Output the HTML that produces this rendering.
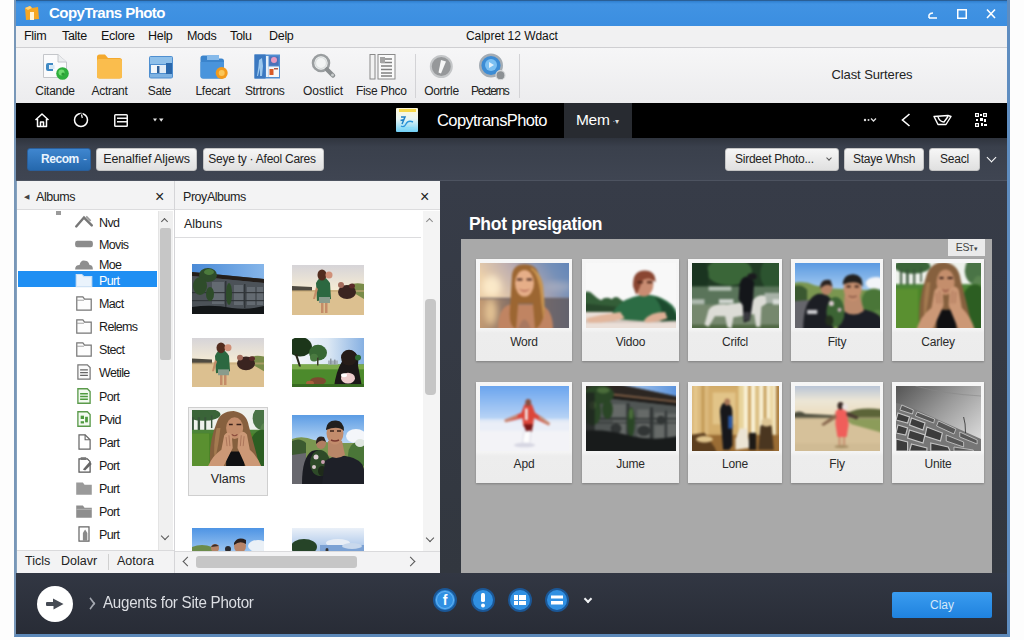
<!DOCTYPE html>
<html><head><meta charset="utf-8"><title>CopyTrans Photo</title>
<style>
*{box-sizing:border-box;margin:0;padding:0}
html,body{width:1024px;height:640px;overflow:hidden;background:#fdfdfd;font-family:"Liberation Sans",sans-serif;}
.a{position:absolute}
#win{position:absolute;left:14px;top:0;width:996px;height:637px;background:#3a404d;overflow:hidden;border-left:2px solid #7897b8;border-right:3px solid #5f8dc0;border-bottom:3px solid #5c88b8}
#stage{position:absolute;left:-16px;top:0;width:1024px;height:640px}
#title{left:16px;top:0;width:992px;height:26px;background:linear-gradient(#2f7fcf 0,#4193e3 3px,#3b8ee0 100%);border-top:1px solid #2a5f96}
#title .t{top:3px;color:#fff;font-weight:bold;font-size:15px;letter-spacing:-0.55px}
#menu{left:16px;top:26px;width:992px;height:22px;background:#f1f1f2;border-bottom:1px solid #cfcfd2}
#menu span{position:absolute;top:3px;font-size:12.5px;letter-spacing:-0.3px;color:#111}
#tool{left:16px;top:48px;width:992px;height:55px;background:linear-gradient(#f6f6f7,#ececee)}
#tool .l{position:absolute;top:36px;font-size:12px;letter-spacing:-0.3px;color:#222;transform:translateX(-50%);white-space:nowrap}
#tool .sep{position:absolute;top:6px;width:1px;height:44px;background:#d3d3d6}
#tool svg.tb{position:absolute;left:0;top:0;width:992px;height:55px}
#black{left:16px;top:103px;width:992px;height:35px;background:#000}
#black svg{position:absolute}
#black .ct{position:absolute;left:421px;top:8px;color:#fff;font-size:16.5px;letter-spacing:-0.6px;white-space:nowrap}
#black .tab{position:absolute;left:548px;top:0;width:68px;height:35px;background:#282b31;color:#fff;font-size:15.5px;line-height:33px;padding-left:12px;letter-spacing:-0.3px}
#sl{left:16px;top:138px;width:992px;height:43px;background:linear-gradient(#2f343e 0,#3a404c 9px,#3f4552 100%);border-bottom:1px solid #4d5360}
.btn{position:absolute;top:148px;height:23px;border-radius:3px;background:linear-gradient(#f6f6f6,#e0e0e0);border:1px solid #c4c4c4;font-size:12px;letter-spacing:-0.25px;color:#222;text-align:center;line-height:21px;white-space:nowrap}
.btn.blue{background:linear-gradient(#3f86cf,#2568ad);border:1px solid #2a5f9b;color:#fff;font-weight:bold}
#lp{left:17px;top:181px;width:157px;height:392px;background:#fff;overflow:hidden}
.ph{position:absolute;left:0;top:0;right:0;height:29px;background:#f3f3f4;border-bottom:1px solid #dcdcde;font-size:12.5px;letter-spacing:-0.45px;color:#222;line-height:32px}
#mp{left:174px;top:181px;width:266px;height:392px;background:#fff;border-left:1px solid #d5d5d8;overflow:hidden}
.ti{position:absolute;left:82px;font-size:12.5px;letter-spacing:-0.65px;color:#1a1a1a;line-height:16px;white-space:nowrap}
.ico{position:absolute;left:57px;width:20px;height:18px;margin-top:-1px}
#rp{left:440px;top:181px;width:568px;height:392px;background:linear-gradient(#373c48,#32373f)}
#gp{left:461px;top:239px;width:531px;height:334px;background:#a9a9a9}
.card{position:absolute;width:96px;height:102px;background:linear-gradient(#f6f6f6 0,#f4f4f4 70px,#ededed 74px,#ececec 100%);box-shadow:0 1px 2px rgba(0,0,0,.25)}
.card .im{position:absolute;left:3.5px;top:3.5px;right:3.5px;height:65px;overflow:hidden;background:#888}
.card .lb{position:absolute;left:0;right:0;top:76px;text-align:center;font-size:12px;letter-spacing:-0.2px;color:#2a2a2a}
.card svg,.th svg,.selim svg{display:block;width:100%;height:100%}
.card .im svg{filter:blur(0.8px);margin:-2px;width:calc(100% + 4px);height:calc(100% + 4px)}
.card .im.nb svg{filter:none;margin:0;width:100%;height:100%}
.th{position:absolute;overflow:hidden;background:#888}
#bot{left:16px;top:573px;width:992px;height:61px;background:linear-gradient(#323743,#282c36)}
.sbv{position:absolute;background:#f0f0f0}
.sbt{position:absolute;background:#c6c6c6;border-radius:2px}
.chev{position:absolute;width:7px;height:7px;border-right:1.500px solid #555;border-bottom:1.500px solid #555}
.bic{position:absolute;top:588px;width:24px;height:24px}
</style></head><body>
<svg width="0" height="0" style="position:absolute"><defs><filter id="b1" x="-10%" y="-10%" width="120%" height="120%"><feGaussianBlur stdDeviation="0.8"/></filter><filter id="b3" x="-10%" y="-10%" width="120%" height="120%"><feGaussianBlur stdDeviation="0.55"/></filter><filter id="b0" x="-2%" y="-10%" width="104%" height="120%"><feGaussianBlur stdDeviation="0.35"/></filter><filter id="b2" x="-30%" y="-30%" width="160%" height="160%"><feGaussianBlur stdDeviation="3"/></filter></defs></svg>
<div id="win"><div id="stage">
<div id="title" class="a">
<svg class="a" style="left:8px;top:4px" width="16" height="16" viewBox="0 0 16 16"><path d="M1 3 L6 1 L8 3 L14 2 L15 14 L2 15Z" fill="#f5a623"/><path d="M1 3 L6 1 L8 3 L4 5Z" fill="#ffd27a"/><rect x="6" y="7" width="4" height="8" fill="#fff3d6"/></svg>
<div class="a t" style="left:33px">CopyTrans Photo</div>
<svg class="a" style="left:910px;top:6px" width="70" height="14" viewBox="0 0 70 14"><path d="M3 11 H11 M3 11 V8 Q4 6 7 6" stroke="#fff" stroke-width="1.500" fill="none"/><rect x="31.750" y="2.750" width="8.500" height="8.500" stroke="#fff" stroke-width="1.500" fill="none"/><path d="M61 2.500 L69 11 M69 2.500 L61 11" stroke="#fff" stroke-width="1.600"/></svg>
</div>
<div id="menu" class="a">
<span style="left:8px">Flim</span><span style="left:46px">Talte</span><span style="left:85px">Eclore</span><span style="left:132px">Help</span><span style="left:171px">Mods</span><span style="left:214px">Tolu</span><span style="left:253px">Delp</span><span style="left:450px;font-size:12px;letter-spacing:-0.05px">Calpret 12 Wdact</span>
</div>
<div id="tool" class="a">
<svg class="tb" viewBox="16 48 992 55">
<g filter="url(#b0)">
<path d="M43.500 54.500 H58 L66.500 62 V77.500 H43.500Z" fill="#fbfbfc" stroke="#c4c6ca"/><path d="M58 54.500 V62 H66.500" fill="#eceef0" stroke="#c4c6ca"/>
<path d="M53 63 H48 Q46 63 46 65 V69 Q46 71 48 71 H53 V69 H49 V65 H53Z" fill="#3f8ac4"/><rect x="49.500" y="65" width="5" height="4" fill="#d6e8f6"/>
<circle cx="62.500" cy="73.500" r="6.300" fill="#2fae3c"/><circle cx="61.500" cy="72.500" r="3" fill="#6fdc6f"/><circle cx="63" cy="74" r="1.600" fill="#2a9a34"/>
<path d="M97 57 Q97 54.500 99.500 54.500 H105 L108 58 H119.500 Q122 58 122 60.500 V76 Q122 78.500 119.500 78.500 H99.500 Q97 78.500 97 76Z" fill="#f4a92e"/><path d="M97 60.500 Q97 59 99 59 H120 Q122 59 122 61 V76 Q122 78.500 119.500 78.500 H99.500 Q97 78.500 97 76Z" fill="#fabd4e"/>
<rect x="149" y="56" width="24" height="22.500" rx="2" fill="#4f8fd0"/><rect x="150" y="57" width="22" height="7" fill="#8fc0ea"/><rect x="151" y="65" width="12" height="8" fill="#f2f6fa"/><rect x="157" y="66" width="2.500" height="7" fill="#2f5f98"/><rect x="160" y="65" width="6" height="8" fill="#e2ecf6"/><rect x="166" y="63" width="6" height="11" fill="#2c68ac"/><rect x="150" y="74" width="22" height="3.500" fill="#7eb2e2"/>
<path d="M200.500 58 Q200.500 55.500 203 55.500 H208 L210.500 58.500 H221.500 Q224 58.500 224 61 V76 Q224 78.500 221.500 78.500 H203 Q200.500 78.500 200.500 76Z" fill="#3a84cc"/><path d="M207 55 H219 V60 H207Z" fill="#86baea"/><path d="M200.500 62 H224 V76 Q224 78.500 221.500 78.500 H203 Q200.500 78.500 200.500 76Z" fill="#4a94dc"/>
<circle cx="221.700" cy="73" r="6" fill="#f39a1c"/><circle cx="221.700" cy="73" r="3" fill="#fbc658"/>
<rect x="254.500" y="54.500" width="25.500" height="24" fill="#4f8ed2"/><rect x="254.500" y="54.500" width="11" height="24" fill="#3a78c0"/><path d="M259 60 L262 58 L263 66 L262 76 H260 L260 68 L258 76 H257 L258.500 66Z" fill="#9cc8ee"/><rect x="266" y="56" width="2.500" height="21" fill="#e8f0f8"/>
<rect x="269.500" y="56.500" width="9" height="9" fill="#4c6fb8"/><circle cx="274" cy="60" r="3" fill="#e89ac0"/><rect x="268.500" y="66.500" width="10.500" height="10.500" fill="#f6f6f6"/><rect x="269.500" y="69" width="4" height="6" fill="#d85a28"/><rect x="274" y="68" width="4" height="1.500" fill="#b05a48"/>
<circle cx="321" cy="63" r="8" fill="#f2f4f4" stroke="#9a9ea0" stroke-width="2.600"/><circle cx="321" cy="63" r="5.500" fill="none" stroke="#d8dcdc" stroke-width="1.200"/><path d="M327 69.500 L333 75.500" stroke="#8a8e90" stroke-width="4.500" stroke-linecap="round"/><circle cx="332.500" cy="75" r="1.500" fill="#c8cccc"/>
<rect x="370" y="54.500" width="5" height="24.500" fill="#f2f2f2" stroke="#8a8a8a"/><rect x="378" y="54.500" width="17" height="24.500" fill="#fafafa" stroke="#8a8a8a"/><path d="M381 59 H392 M381 62.500 H392 M381 66 H392 M381 69.500 H392 M381 73 H392 M381 76 H392" stroke="#808080" stroke-width="1.400"/><rect x="380" y="57" width="5" height="6" fill="#a4a4a4"/>
<circle cx="441.300" cy="66.500" r="10.500" fill="#96989a" stroke="#c4c6c8" stroke-width="2"/><path d="M441 60 L446 61.500 L441 73.500 L438.500 72.500Z" fill="#f6f6f6"/>
<circle cx="491" cy="65.500" r="10.800" fill="#3d8cd4" stroke="#a4acb4" stroke-width="2.400"/><circle cx="491" cy="65" r="6" fill="#7cc0f2"/><path d="M489 62 L494 65 L489 68Z" fill="#e4f2fc"/><circle cx="500.500" cy="75.200" r="4.500" fill="#8c9094" stroke="#d4d6d8" stroke-width="1.200"/>
</g></svg>
<span class="l" style="left:39px">Citande</span><span class="l" style="left:93.5px">Actrant</span><span class="l" style="left:143.5px">Sate</span><span class="l" style="left:196.8px">Lfecart</span><span class="l" style="left:248.7px">Strtrons</span><span class="l" style="left:307px;letter-spacing:0">Oostlict</span><span class="l" style="left:365.3px">Fise Phco</span><span class="l" style="left:425.5px">Oortrle</span><span class="l" style="left:473.8px;letter-spacing:-1.2px">Pecterns</span>
<div class="sep" style="left:399px"></div><div class="sep" style="left:503px"></div>
<span class="l" style="left:856px;top:19px;font-size:13px;letter-spacing:-0.1px">Clast Surteres</span>
</div>
<div id="black" class="a">
<svg style="left:18px;top:9px" width="16" height="16" viewBox="0 0 16 16"><path d="M1.500 8 L8 2 L14.500 8 M3.500 7 V14.500 H12.500 V7 M6.500 14 V10 H9.500 V14" stroke="#fff" stroke-width="1.500" fill="none" stroke-linejoin="round"/></svg>
<svg style="left:57px;top:9px" width="16" height="16" viewBox="0 0 16 16"><circle cx="8" cy="8" r="6.500" stroke="#fff" stroke-width="1.500" fill="none"/><path d="M8 1.500 L9.500 6" stroke="#000" stroke-width="3"/><path d="M8.500 2.500 L9.300 6" stroke="#fff" stroke-width="1.200"/></svg>
<svg style="left:98px;top:11px" width="15" height="13" viewBox="0 0 15 13"><rect x=".75" y=".75" width="12.500" height="11.500" rx=".8" stroke="#f4f4f4" stroke-width="1.500" fill="none"/><path d="M3 4.300 H13 M3 7.800 H13" stroke="#f4f4f4" stroke-width="1.500"/></svg>
<svg style="left:136px;top:14px" width="14" height="6" viewBox="0 0 14 6"><path d="M1 1.500 L5 1.500 L3 4.500Z M7 1.500 L11.500 1.500 L9.200 4.800Z" fill="#e4e4e4"/></svg>
<svg style="left:380px;top:5px" width="22" height="24" viewBox="0 0 22 24"><defs><linearGradient id="lg" x2="0" y2="1"><stop offset="0" stop-color="#fff8da"/><stop offset=".45" stop-color="#eaf6f4"/><stop offset="1" stop-color="#6fcff6"/></linearGradient></defs><rect width="22" height="24" rx="1" fill="url(#lg)"/><rect x="3" y="1" width="17" height="3" fill="#f6d84a"/><path d="M5 9 L9 9 L6 16 M4.500 12.500 L8.500 11.500" stroke="#1f82c8" stroke-width="1.500" fill="none"/><path d="M5 18 Q8 20 10 16 Q12 12 17 14" stroke="#2a96dc" stroke-width="1.400" fill="none"/><path d="M4 21 Q10 19 18 20" stroke="#8adcf8" stroke-width="1.500" fill="none"/></svg>
<div class="ct">CopytransPhoto</div>
<div class="tab">Mem<span style="font-size:8px;letter-spacing:0;color:#ddd;position:relative;top:-1px;left:3px">·▾</span></div>
<svg style="left:847px;top:14px" width="14" height="6" viewBox="0 0 14 6"><circle cx="2" cy="3" r="1.200" fill="#ddd"/><circle cx="5.500" cy="3" r="1" fill="#ddd"/><path d="M8 1.500 L10.500 4 L13 1.500" stroke="#ddd" stroke-width="1.300" fill="none"/></svg>
<svg style="left:885px;top:10px" width="10" height="14" viewBox="0 0 10 14"><path d="M8.500 1 L1.500 7 L8.500 13" stroke="#fff" stroke-width="1.600" fill="none"/></svg>
<svg style="left:917px;top:11px" width="19" height="12" viewBox="0 0 19 12"><path d="M1 2.500 L15 1.500 L18 2.500 L13 10.500 H5Z M5 3 Q7 8 11 8 L15 2.500" stroke="#fff" stroke-width="1.400" fill="none" stroke-linejoin="round"/></svg>
<svg style="left:959px;top:10px" width="12" height="14" viewBox="0 0 12 14"><g fill="#fff"><rect x="0" y="0" width="4" height="4"/><rect x="8" y="0" width="4" height="4"/><rect x="0" y="10" width="4" height="4"/><rect x="5" y="1" width="2" height="2"/><rect x="5" y="5" width="3" height="3"/><rect x="1" y="6" width="2" height="2"/><rect x="9" y="6" width="2" height="3"/><rect x="6" y="10" width="2" height="3"/><rect x="9" y="11" width="3" height="2"/></g><g fill="#000"><rect x="1.200" y="1.200" width="1.600" height="1.600"/><rect x="9.200" y="1.200" width="1.600" height="1.600"/><rect x="1.200" y="11.200" width="1.600" height="1.600"/></g></svg>
</div>
<div id="sl" class="a"></div>
<div class="btn blue" style="left:27px;width:64px;text-align:left;padding-left:13px;color:#eaf4fe;letter-spacing:-0.45px">Recom<span style="font-weight:normal;color:#a8c8ea;position:absolute;left:55px">-</span></div>
<div class="btn" style="left:96px;width:101px;font-size:12.500px;letter-spacing:-0.05px">Eenalfief Aljews</div>
<div class="btn" style="left:203px;width:121px;text-indent:-3px">Seye ty · Afeol Cares</div>
<div class="btn" style="left:725px;width:114px;text-align:left;padding-left:9px">Sirdeet Photo...<div class="chev" style="left:101px;top:7px;width:4px;height:4px;transform:rotate(45deg)"></div></div>
<div class="btn" style="left:844px;width:80px">Staye Whsh</div>
<div class="btn" style="left:929px;width:51px">Seacl</div>
<div class="chev" style="left:988px;top:154px;transform:rotate(45deg);border-color:#fff"></div>

<div class="a" style="left:16px;top:181px;width:1px;height:392px;background:#86a2be"></div>
<div id="lp" class="a">
<div class="ph"><span style="position:absolute;left:7px;font-size:7px;color:#444">◀</span><span style="position:absolute;left:19px">Albums</span><span style="position:absolute;left:138px;font-size:16px">×</span></div>
<div style="position:absolute;left:39px;top:30px;width:5px;height:4px;background:#9a9a9a"></div>
<svg class="ico" style="top:33px" viewBox="0 0 18 16"><path d="M2 12 L9 4 L16 11" stroke="#777" stroke-width="2.2" fill="none" stroke-linecap="round"/><path d="M11 3 L15 7" stroke="#999" stroke-width="1.5"/></svg><div class="ti" style="top:34px">Nvd</div>
<svg class="ico" style="top:55px" viewBox="0 0 18 16"><rect x="1" y="5" width="16" height="6" rx="2" fill="#8c8c8c"/></svg><div class="ti" style="top:56px">Movis</div>
<svg class="ico" style="top:75px" viewBox="0 0 18 16"><path d="M1 13 Q1 9 5 9 Q6 4 10 5 Q13 5 14 9 Q17 9 17 13Z" fill="#8e8e8e"/></svg><div class="ti" style="top:76px">Moe</div>
<div style="position:absolute;left:1px;top:90px;width:139px;height:16px;background:#1f8ff3"></div><svg class="ico" style="top:91px" viewBox="0 0 18 16"><path d="M2 3 L7 3 L9 5 L16 5 L16 14 L2 14Z" fill="#eaf3fc" stroke="#cfe2f5" stroke-width="1"/></svg><div class="ti" style="top:92px;color:#fff">Purt</div>
<svg class="ico" style="top:114px" viewBox="0 0 18 16"><path d="M2.500 2.500 L8 2.500 L9.500 4.500 L15.500 4.500 L15.500 14.500 L2.500 14.500Z" fill="#fdfdfd" stroke="#777" stroke-width="1.100"/><path d="M2.500 5.500 L9 5.500" stroke="#999" stroke-width=".8"/></svg><div class="ti" style="top:115px">Mact</div>
<svg class="ico" style="top:137px" viewBox="0 0 18 16"><path d="M2.500 2.500 L8 2.500 L9.500 4.500 L15.500 4.500 L15.500 14.500 L2.500 14.500Z" fill="#fdfdfd" stroke="#777" stroke-width="1.100"/><path d="M2.500 5.500 L9 5.500" stroke="#999" stroke-width=".8"/></svg><div class="ti" style="top:138px">Relems</div>
<svg class="ico" style="top:160px" viewBox="0 0 18 16"><path d="M2.500 2.500 L8 2.500 L9.500 4.500 L15.500 4.500 L15.500 14.500 L2.500 14.500Z" fill="#fdfdfd" stroke="#777" stroke-width="1.100"/><path d="M2.500 5.500 L9 5.500" stroke="#999" stroke-width=".8"/></svg><div class="ti" style="top:161px">Stect</div>
<svg class="ico" style="top:183px" viewBox="0 0 18 16"><path d="M3.500 1.500 L12 1.500 L14.500 4 L14.500 14.500 L3.500 14.500Z" fill="#fafafa" stroke="#777" stroke-width="1.100"/><path d="M5.500 6 H12.500 M5.500 8.500 H12.500 M5.500 11 H12.500" stroke="#666" stroke-width="1.100"/></svg><div class="ti" style="top:184px">Wetile</div>
<svg class="ico" style="top:207px" viewBox="0 0 18 16"><path d="M3.500 1.500 L12 1.500 L14.500 4 L14.500 14.500 L3.500 14.500Z" fill="#f2faf0" stroke="#5a9a4a" stroke-width="1.200"/><path d="M5.500 6 H12.500 M5.500 8.500 H12.500 M5.500 11 H12.500" stroke="#4e9a3e" stroke-width="1.300"/></svg><div class="ti" style="top:208px">Port</div>
<svg class="ico" style="top:230px" viewBox="0 0 18 16"><path d="M3.500 1.500 L12 1.500 L14.500 4 L14.500 14.500 L3.500 14.500Z" fill="#f2faf0" stroke="#5a9a4a" stroke-width="1.200"/><rect x="6" y="5" width="3" height="3" fill="#4e9a3e"/><rect x="10" y="6" width="2.500" height="5" fill="#4e9a3e"/><rect x="6" y="10" width="3" height="2" fill="#4e9a3e"/></svg><div class="ti" style="top:231px">Pvid</div>
<svg class="ico" style="top:253px" viewBox="0 0 18 16"><path d="M4.500 1.500 L10 1.500 L14.500 6 L14.500 14.500 L4.500 14.500Z" fill="#fff" stroke="#666" stroke-width="1.100"/><path d="M10 1.500 L10 6 L14.500 6" fill="none" stroke="#666" stroke-width="1"/></svg><div class="ti" style="top:254px">Part</div>
<svg class="ico" style="top:276px" viewBox="0 0 18 16"><path d="M4.500 2.500 L12 2.500 L14.500 5 L14.500 14.500 L4.500 14.500Z" fill="#fff" stroke="#555" stroke-width="1.100"/><path d="M8 12 L14 5 L16 7 L10 13Z" fill="#666"/><rect x="6" y="1" width="5" height="2.500" fill="#777"/></svg><div class="ti" style="top:277px">Port</div>
<svg class="ico" style="top:299px" viewBox="0 0 18 16"><path d="M2 3 L8 3 L9.500 5 L16 5 L16 14 L2 14Z" fill="#9a9a9a"/></svg><div class="ti" style="top:300px">Purt</div>
<svg class="ico" style="top:322px" viewBox="0 0 18 16"><path d="M2 3 L8 3 L9.500 5 L16 5 L16 14 L2 14Z" fill="#8e8e8e"/><path d="M2 6.500 H16" stroke="#b8b8b8" stroke-width=".8"/></svg><div class="ti" style="top:323px">Port</div>
<svg class="ico" style="top:345px" viewBox="0 0 18 16"><path d="M4.500 1.500 L13.500 1.500 L13.500 14.500 L4.500 14.500Z" fill="#fff" stroke="#666" stroke-width="1.100"/><path d="M8 14 L8 7 L10 4 L12 7 L12 14Z" fill="#8a8a8a"/></svg><div class="ti" style="top:346px">Purt</div>

<div class="sbv" style="left:141px;top:30px;width:15px;height:339px;border-left:1px solid #e4e4e4"></div>
<div class="sbt" style="left:143px;top:47px;width:11px;height:132px"></div>
<div class="chev" style="left:145px;top:38px;width:5px;height:5px;transform:rotate(225deg)"></div>
<div class="chev" style="left:145px;top:352px;width:6px;height:6px;transform:rotate(45deg)"></div>
<div style="position:absolute;left:0;top:369px;width:157px;height:23px;background:#f3f3f4;border-top:1px solid #dadadc;font-size:12.500px;color:#222;line-height:21px"><span style="position:absolute;left:8px">Ticls</span><span style="position:absolute;left:44px">Dolavr</span><span style="position:absolute;left:91px;top:3px;width:1px;height:16px;background:#d0d0d0"></span><span style="position:absolute;left:100px">Aotora</span></div>
</div>

<div id="mp" class="a">
<div class="ph"><span style="position:absolute;left:8px">ProyAlbums</span><span style="position:absolute;left:245px;font-size:16px">×</span></div>
<div style="position:absolute;left:0;top:30px;width:246px;height:27px;border-bottom:1px solid #dcdcde;font-size:12.500px;line-height:26px;color:#222;padding-left:9px">Albuns</div>
<div class="sbv" style="left:248px;top:30px;width:17px;height:340px;background:#f4f4f4"></div>
<div class="sbt" style="left:250px;top:118px;width:11px;height:96px;border-radius:4px"></div>
<div class="chev" style="left:252px;top:38px;width:5px;height:5px;transform:rotate(225deg);border-color:#8a8a8a"></div>
<div class="chev" style="left:252px;top:354px;width:6px;height:6px;transform:rotate(45deg)"></div>
<div style="position:absolute;left:0;top:370px;width:266px;height:22px;background:#f3f3f4;border-top:1px solid #dadadc"></div>
<div class="sbt" style="left:21px;top:375px;width:161px;height:12px;border-radius:3px"></div>
<div class="chev" style="left:9px;top:377px;transform:rotate(135deg)"></div>
<div class="chev" style="left:232px;top:377px;transform:rotate(-45deg)"></div>
</div>
<div class="a" style="left:188px;top:407px;width:80px;height:89px;background:#f0f0f0;border:1px solid #cfcfcf"></div>
<div class="a selim" style="left:192px;top:410px;width:72px;height:56px;overflow:hidden"><svg viewBox="6 0 76 62" preserveAspectRatio="none"><rect width="88" height="65" fill="#3f842c"/>
<g><rect width="88" height="22" fill="#eef2ec"/><ellipse cx="18" cy="5" rx="18" ry="7" fill="#3a6438"/><ellipse cx="80" cy="9" rx="10" ry="13" fill="#4a7446"/><ellipse cx="84" cy="22" rx="6" ry="8" fill="#5a8450"/>
<g fill="#38543a"><rect x="6" y="8" width="2" height="16"/><rect x="12" y="8" width="2.500" height="16"/><rect x="19" y="8" width="2" height="16"/><rect x="26" y="6" width="1.500" height="14"/></g>
<rect y="22" width="88" height="6" fill="#4c8438"/><rect y="26" width="88" height="39" fill="#4a8428"/><rect x="0" y="26" width="24" height="39" fill="#5a9030"/><ellipse cx="80" cy="46" rx="14" ry="24" fill="#2c5e22"/>
<path d="M26 65 Q22 40 32 14 Q36 1 50 1 Q64 3 66 18 Q72 40 78 65Z" fill="#86603e"/><path d="M32 20 Q28 40 30 56 Q34 40 36 20Z" fill="#a47a50"/>
<path d="M42 65 L42 46 L60 46 L62 65Z" fill="#101012"/>
<ellipse cx="51" cy="20" rx="9" ry="12" fill="#c48e6c"/><path d="M45 16 H49 M53 16 H58" stroke="#3a221a" stroke-width="1.800"/>
<path d="M22 65 L38 65 L49 42 L48 28 Q44 22 40 28 L37 44 Q26 52 22 65Z" fill="#cc9876"/><path d="M80 65 L64 65 L54 42 L55 27 Q60 21 64 27 L67 44 Q76 52 80 65Z" fill="#cc9876"/><path d="M42 30 L43 40 M45 28 L46 40 M58 28 L57 40 M61 29 L60 40" stroke="#a06850" stroke-width=".8"/><path d="M48 27 Q51 30 54 27" stroke="#8a4a3c" stroke-width="1.200" fill="none"/></g></svg></div>
<div class="a" style="left:188px;top:472px;width:80px;text-align:center;font-size:12.500px;color:#222">Vlams</div>
<div class="th" style="left:192px;top:264px;width:72px;height:50px"><svg viewBox="0 0 72 50" preserveAspectRatio="none"><defs><linearGradient id="w2" x1="0" x2="1"><stop offset="0" stop-color="#4a8ad6"/><stop offset="1" stop-color="#86b6ea"/></linearGradient></defs>
<rect width="72" height="50" fill="#454b52"/><polygon points="0,0 72,0 72,15 0,8" fill="url(#w2)"/>
<g><polygon points="0,8 72,15 72,19 0,12" fill="#241e1a"/><polygon points="0,12 72,19 72,45 0,45" fill="#4c5258"/>
<g fill="#697078" opacity=".8"><rect x="20" y="18" width="12" height="22"/><rect x="42" y="21" width="9" height="20"/><rect x="55" y="23" width="8" height="18"/><rect x="65" y="23" width="6" height="18"/></g>
<g fill="#2e3236" opacity=".9"><rect x="33" y="17" width="1.500" height="26"/><rect x="52" y="20" width="1.500" height="24"/><rect x="0" y="28" width="72" height="1.200"/><rect x="0" y="36" width="72" height="1.200"/></g>
<g fill="#2e4c2a"><ellipse cx="16" cy="11" rx="9" ry="7"/><ellipse cx="8" cy="22" rx="7" ry="9"/><ellipse cx="37" cy="30" rx="3" ry="11"/><ellipse cx="18" cy="30" rx="4" ry="7"/></g><ellipse cx="17" cy="8" rx="5" ry="3" fill="#4c7a3c"/>
<path d="M0 43 Q20 40 40 44 Q56 46 72 42 L72 50 L0 50Z" fill="#131618"/></g></svg></div>
<div class="th" style="left:292px;top:265px;width:72px;height:50px"><svg viewBox="0 0 72 50" preserveAspectRatio="none"><defs><linearGradient id="bg0" x2="0" y2="1"><stop offset="0" stop-color="#d6d4d8"/><stop offset="1" stop-color="#f6ecd4"/></linearGradient></defs>
<rect width="72" height="50" fill="#dcc090"/><rect width="72" height="25" fill="url(#bg0)"/>
<g><path d="M0 21 L20 22 L20 26 L0 26Z" fill="#4e4a40"/><path d="M56 20 Q64 17 72 19 L72 34 L62 28 L56 26Z" fill="#7a8c4a"/><rect y="25" width="72" height="2" fill="#c4a878" opacity=".6"/>
<ellipse cx="55" cy="27" rx="9" ry="7" fill="#3a2420"/><ellipse cx="49" cy="20" rx="3" ry="3" fill="#a46c5c"/><ellipse cx="60" cy="21" rx="3" ry="2.500" fill="#5a2a28"/>
<path d="M24 18 Q30 6 38 18 L39 34 L25 36Z" fill="#2c6840"/><ellipse cx="30" cy="10" rx="4.500" ry="5.500" fill="#522c1e"/><ellipse cx="37" cy="10" rx="3.500" ry="3.500" fill="#d09078"/>
<rect x="29" y="36" width="2.500" height="12" fill="#c48c68"/><rect x="33" y="36" width="2.500" height="12" fill="#c48c68"/><rect x="27" y="32" width="11" height="6" fill="#8a9c8c"/><path d="M24 22 L21 34 L23 34 L26 24Z" fill="#c48c68"/></g></svg></div>
<div class="th" style="left:192px;top:338px;width:72px;height:49px"><svg viewBox="0 0 72 50" preserveAspectRatio="none"><defs><linearGradient id="bg-8" x2="0" y2="1"><stop offset="0" stop-color="#d6d4d8"/><stop offset="1" stop-color="#f6ecd4"/></linearGradient></defs>
<rect width="72" height="50" fill="#dcc090"/><rect width="72" height="25" fill="url(#bg-8)"/>
<g><path d="M0 21 L20 22 L20 26 L0 26Z" fill="#4e4a40"/><path d="M56 20 Q64 17 72 19 L72 34 L62 28 L56 26Z" fill="#7a8c4a"/><rect y="25" width="72" height="2" fill="#c4a878" opacity=".6"/>
<ellipse cx="54" cy="26" rx="9" ry="7" fill="#3a2420"/><ellipse cx="48" cy="20" rx="3" ry="3" fill="#a46c5c"/><ellipse cx="60" cy="21" rx="3" ry="2.500" fill="#5a2a28"/>
<path d="M23 18 Q29 6 37 18 L38 34 L24 36Z" fill="#2c6840"/><ellipse cx="29" cy="10" rx="4.500" ry="5.500" fill="#522c1e"/><ellipse cx="36" cy="10" rx="3.500" ry="3.500" fill="#d09078"/>
<rect x="28" y="36" width="2.500" height="12" fill="#c48c68"/><rect x="32" y="36" width="2.500" height="12" fill="#c48c68"/><rect x="26" y="32" width="11" height="6" fill="#8a9c8c"/><path d="M23 22 L20 34 L22 34 L25 24Z" fill="#c48c68"/></g></svg></div>
<div class="th" style="left:292px;top:338px;width:72px;height:49px"><svg viewBox="0 0 72 50" preserveAspectRatio="none"><defs><linearGradient id="pk1" x1="0" x2="1"><stop offset="0" stop-color="#f6f8fa"/><stop offset=".5" stop-color="#dce8f4"/><stop offset="1" stop-color="#86b0e2"/></linearGradient></defs>
<rect width="72" height="50" fill="url(#pk1)"/>
<g><rect y="27" width="72" height="23" fill="#4c8a2c"/><rect y="27" width="72" height="5" fill="#7cab4c"/>
<ellipse cx="8" cy="9" rx="12" ry="10" fill="#1c361a"/><path d="M5 16 L9 29 L7 29 L3 17Z" fill="#26261a"/><ellipse cx="26" cy="15" rx="9" ry="8" fill="#386834"/><ellipse cx="22" cy="20" rx="4" ry="4" fill="#4a7a40"/><rect x="25" y="20" width="1.500" height="8" fill="#3a3a28"/>
<rect x="36" y="23" width="10" height="4" fill="#a8b2bc"/><rect x="38" y="21" width="1.500" height="6" fill="#8a949e"/><rect x="42" y="22" width="1.500" height="5" fill="#8a949e"/>
<path d="M42 50 Q44 34 50 24 Q52 12 60 13 Q68 16 66 28 L70 50Z" fill="#1c1818"/><ellipse cx="57" cy="20" rx="8" ry="8" fill="#261c18"/><ellipse cx="66" cy="20" rx="3" ry="3" fill="#2c6a30"/>
<ellipse cx="56" cy="41" rx="7" ry="5.500" fill="#eccccc"/><ellipse cx="52" cy="38" rx="3" ry="2" fill="#fff"/><ellipse cx="26" cy="44" rx="8" ry="4" fill="#7c4a30"/><ellipse cx="18" cy="46" rx="4" ry="2.500" fill="#a8603c"/><rect y="47" width="72" height="3" fill="#386a22"/></g></svg></div>
<div class="th" style="left:292px;top:415px;width:72px;height:69px"><svg viewBox="0 0 72 69" preserveAspectRatio="none"><defs><linearGradient id="mn2" x2="0" y2="1"><stop offset="0" stop-color="#5c9ce4"/><stop offset=".4" stop-color="#b8d6f4"/></linearGradient></defs>
<rect width="72" height="69" fill="url(#mn2)"/>
<g><ellipse cx="64" cy="21" rx="10" ry="7" fill="#f4f6fa"/><path d="M0 24 Q10 20 22 25 L40 28 L72 28 L72 69 L0 69Z" fill="#7a9650"/><path d="M0 26 Q8 22 14 28 L14 40 L0 40Z" fill="#3c5a30"/>
<path d="M0 40 L14 38 L14 69 L0 69Z" fill="#68686e"/><ellipse cx="66" cy="40" rx="10" ry="13" fill="#4a7638"/><ellipse cx="68" cy="28" rx="5" ry="4" fill="#dfe6e0"/>
<path d="M10 69 Q10 42 20 36 Q34 32 36 46 L36 69Z" fill="#1a1c22"/><ellipse cx="29" cy="28" rx="5" ry="6" fill="#b07e62"/><path d="M24 27 Q25 20 32 22 L34 27 Q29 23 24 29Z" fill="#2a2220"/>
<ellipse cx="28" cy="48" rx="10" ry="13" fill="#2e4a28"/><ellipse cx="24" cy="42" rx="2.500" ry="2.500" fill="#e0d0d6"/><ellipse cx="31" cy="47" rx="2" ry="2" fill="#c8a0b0"/><ellipse cx="22" cy="52" rx="2" ry="2" fill="#d8c8cc"/><ellipse cx="30" cy="56" rx="4" ry="5" fill="#1e2a1a"/>
<path d="M30 69 L33 46 Q44 38 58 42 Q72 46 72 56 L72 69Z" fill="#1e2028"/><path d="M36 26 L50 26 L53 40 Q44 46 36 40Z" fill="#b88668"/>
<ellipse cx="43" cy="18" rx="8.500" ry="11.500" fill="#c28c6c"/><path d="M34 14 Q35 5 44 5.500 Q52 6 52 16 Q46 10 34 15Z" fill="#22201e"/><path d="M38 16 H42 M45 16 H49" stroke="#3a221a" stroke-width="1.600"/><path d="M39 25 Q43 27 47 25" stroke="#7a3a30" stroke-width="1.400" fill="none"/></g></svg></div>
<div class="th" style="left:192px;top:528px;width:72px;height:23px"><svg viewBox="0 0 72 23" preserveAspectRatio="none"><defs><linearGradient id="sp1" x2="0" y2="1"><stop offset="0" stop-color="#4e94e4"/><stop offset="1" stop-color="#9ac4f0"/></linearGradient></defs>
<rect width="72" height="23" fill="url(#sp1)"/><g><ellipse cx="66" cy="18" rx="10" ry="6" fill="#eaf0f6"/><path d="M0 19 Q10 15 20 19 L20 23 L0 23Z" fill="#6c8c4c"/><ellipse cx="23" cy="20" rx="4" ry="4" fill="#b48266"/><path d="M19 19 Q22 14 27 18Z" fill="#3a2c28"/><ellipse cx="36" cy="21" rx="3" ry="3" fill="#2a2a2e"/>
<ellipse cx="48" cy="18" rx="6" ry="7" fill="#b88468"/><path d="M42 15 Q46 8 54 12 L54 16 Q48 12 42 17Z" fill="#2a201e"/></g></svg></div>
<div class="th" style="left:292px;top:528px;width:72px;height:23px"><svg viewBox="0 0 72 23" preserveAspectRatio="none"><defs><linearGradient id="st1" x2="0" y2="1"><stop offset="0" stop-color="#eaf0f8"/><stop offset="1" stop-color="#a4c2e8"/></linearGradient></defs>
<rect width="72" height="23" fill="url(#st1)"/><g><ellipse cx="12" cy="19" rx="13" ry="8" fill="#264428"/><ellipse cx="46" cy="15" rx="12" ry="4" fill="#e8eef6"/><rect x="28" y="17" width="44" height="6" fill="#7ca2d4"/><ellipse cx="60" cy="18" rx="10" ry="3" fill="#c8d8ec"/><ellipse cx="35" cy="22" rx="1.500" ry="2" fill="#333"/></g></svg></div>


<div id="rp" class="a"><div class="a" style="left:29px;top:33px;color:#fff;font-weight:bold;font-size:17.500px;letter-spacing:-0.3px">Phot presigation</div></div>
<div id="gp" class="a"><div class="a" style="left:487px;top:0px;width:37px;height:17px;background:#eaeaea;font-size:10.500px;color:#444;text-align:center;line-height:17px;letter-spacing:-0.3px">ESт<span style="font-size:7px">▾</span></div></div>
<div class="card" style="left:476px;top:259px;width:96px;height:102px"><div class="im"><svg viewBox="0 0 88 65" preserveAspectRatio="none"><defs><linearGradient id="ss1" x1="0" x2="1" y1=".3" y2="0"><stop offset="0" stop-color="#ecd0aa"/><stop offset=".4" stop-color="#b8aab0"/><stop offset=".75" stop-color="#7690b8"/><stop offset="1" stop-color="#6084b8"/></linearGradient>
<linearGradient id="ss2" x1="0" x2="1"><stop offset="0" stop-color="#c49a72"/><stop offset=".35" stop-color="#857066"/><stop offset="1" stop-color="#62626e"/></linearGradient></defs>
<rect width="88" height="36" fill="url(#ss1)"/><rect y="35" width="88" height="30" fill="url(#ss2)"/>
<ellipse cx="13" cy="24" rx="9" ry="10" fill="#fff0d0" opacity=".8" filter="url(#b2)"/><ellipse cx="12" cy="48" rx="6" ry="12" fill="#f4d4a0" opacity=".75" filter="url(#b2)"/>
<ellipse cx="76" cy="24" rx="14" ry="4" fill="#b8b8c4" opacity=".6" filter="url(#b2)"/>
<rect y="34.500" width="88" height="1.500" fill="#6e6468" opacity=".7"/>
<g><path d="M19 65 Q19 44 30 41 L58 41 Q71 44 71 65Z" fill="#c08462"/>
<path d="M32 16 Q32 3 44 3 Q58 3 58 18 L63 48 Q60 62 54 64 L52 40 L38 40 L36 64 Q30 62 30 50Z" fill="#9c6632"/><path d="M50 8 Q58 12 60 40 L62 56 Q64 44 62 30 Q62 12 50 6Z" fill="#c89450"/>
<ellipse cx="44" cy="21" rx="9" ry="12.500" fill="#e6ae88"/><path d="M38 26 Q44 32 50 26 Q44 29 38 26Z" fill="#b46a58"/><path d="M37 17.500 H42 M46 17.500 H51" stroke="#4a2a20" stroke-width="1.800"/>
<path d="M38 64 Q44 46 50 64Z" fill="#a87860"/></g></svg></div><div class="lb" style="top:76px">Word</div></div>
<div class="card" style="left:582px;top:259px;width:97px;height:102px"><div class="im"><svg viewBox="0 0 88 65" preserveAspectRatio="none"><rect width="88" height="65" fill="#f8f8f8"/>
<g><path d="M0 30 Q4 27 8 31 Q12 35 16 37 Q20 33 26 36 Q30 32 34 36 L40 40 L40 52 L0 52Z" fill="#345e38"/><path d="M0 40 L40 44 L40 52 L0 52Z" fill="#28482c"/>
<rect y="48" width="88" height="17" fill="#eadfd8"/><rect y="56" width="88" height="2" fill="#cfc0b8"/>
<path d="M26 50 Q32 38 46 34 Q64 28 78 38 Q88 44 88 56 L60 57 L34 55Z" fill="#2c6c44"/><path d="M66 34 Q84 40 88 56 L72 57 Q76 46 66 34Z" fill="#1c4a2e"/>
<ellipse cx="56" cy="22" rx="9" ry="11.500" fill="#c98c72"/><path d="M46 24 Q45 9 57 9 Q67 9 67 20 Q61 14 55 18 Q52 26 49 32Z" fill="#8a4632"/><path d="M50 20 H55 M59 20 H64" stroke="#4a2418" stroke-width="1.800"/>
<path d="M2 54 Q18 50 34 48 L38 54 Q20 59 4 58Z" fill="#e2b69c"/><path d="M56 56 Q62 48 76 48 L78 54 Q68 58 58 58Z" fill="#dcae94"/>
</g></svg></div><div class="lb" style="top:76px">Vidoo</div></div>
<div class="card" style="left:688px;top:259px;width:94px;height:102px"><div class="im"><svg viewBox="0 0 88 65" preserveAspectRatio="none"><rect width="88" height="65" fill="#2a4a2c"/>
<g><rect width="88" height="28" fill="#203a24"/><ellipse cx="38" cy="10" rx="22" ry="13" fill="#3a6638"/><ellipse cx="80" cy="12" rx="12" ry="16" fill="#2c5430"/><ellipse cx="8" cy="14" rx="10" ry="16" fill="#1a3420"/>
<rect y="24" width="88" height="18" fill="#5a745a"/><rect x="18" y="24" width="22" height="4" fill="#b4c0b4"/><rect x="28" y="36" width="14" height="4" fill="#d0d6d0"/><rect x="0" y="36" width="14" height="5" fill="#c4cac4" opacity=".8"/><rect x="72" y="30" width="16" height="10" fill="#a8b2a8"/><rect x="80" y="36" width="8" height="6" fill="#d8dcd8"/>
<rect y="41" width="88" height="24" fill="#76886e"/><rect y="60" width="88" height="5" fill="#506844"/>
<path d="M14 60 L18 46 Q22 40 36 41 L60 38 Q66 30 73 33 L74 40 L69 43 L68 62 L64 62 L62 50 L42 53 L40 64 L36 62 L34 52 L24 52 L18 62Z" fill="#dcdcd6"/>
<path d="M48 22 Q50 13 58 15 L62 20 L61 36 L58 56 L52 58 L51 42 L47 36Z" fill="#14161a"/><ellipse cx="60" cy="14.500" rx="4.500" ry="3" fill="#1a1a1e"/><rect x="52" y="48" width="6" height="8" fill="#3a3a40"/></g></svg></div><div class="lb" style="top:76px">Crifcl</div></div>
<div class="card" style="left:791px;top:259px;width:92px;height:102px"><div class="im"><svg viewBox="0 0 88 65" preserveAspectRatio="none"><defs><linearGradient id="mn1" x2="0" y2="1"><stop offset="0" stop-color="#5596e0"/><stop offset=".4" stop-color="#a4caf0"/></linearGradient></defs>
<rect width="88" height="65" fill="url(#mn1)"/>
<g><ellipse cx="82" cy="21" rx="10" ry="6" fill="#f2f4f8"/><path d="M0 21 Q10 18 22 23 L40 26 L88 28 L88 65 L0 65Z" fill="#7a9650"/><path d="M0 24 Q8 21 14 27 L14 38 L0 38Z" fill="#3a5830"/>
<path d="M0 38 L26 36 L26 65 L0 65Z" fill="#66666c"/><ellipse cx="80" cy="38" rx="12" ry="12" fill="#4a7638"/><ellipse cx="84" cy="56" rx="8" ry="10" fill="#5a8444"/>
<path d="M10 65 Q10 36 24 31 Q40 30 40 46 L40 65Z" fill="#1c1e24"/><ellipse cx="33" cy="25" rx="6" ry="7" fill="#b68266"/><path d="M27 24 Q28 16 37 18 L39 24 Q33 20 27 26Z" fill="#2a2220"/><rect x="14" y="46" width="10" height="4" fill="#c8c8cc"/>
<path d="M44 65 L46 50 Q60 42 76 47 Q88 50 88 58 L88 65Z" fill="#1c1e26"/><path d="M51 32 L66 32 L70 47 Q60 54 50 47Z" fill="#bc8a6c"/>
<ellipse cx="59" cy="26" rx="9" ry="12" fill="#c48e6e"/><path d="M49 22 Q50 12 60 12.500 Q69 13 69 24 Q63 17 50 22Z" fill="#22201e"/><path d="M53 24 H57 M61 24 H65" stroke="#3a221a" stroke-width="1.800"/><path d="M55 33 Q59 35 63 33" stroke="#7a4a3c" stroke-width="1.200" fill="none"/>
<ellipse cx="42" cy="48" rx="9" ry="14" fill="#3c6434"/><ellipse cx="38" cy="40" rx="2.500" ry="2.500" fill="#d8c8cc"/><ellipse cx="46" cy="46" rx="2" ry="2" fill="#c8b0b8"/><ellipse cx="36" cy="56" rx="4" ry="5" fill="#23301e"/></g></svg></div><div class="lb" style="top:76px">Fity</div></div>
<div class="card" style="left:892px;top:259px;width:92px;height:102px"><div class="im"><svg viewBox="0 0 88 65" preserveAspectRatio="none"><rect width="88" height="65" fill="#3f842c"/>
<g><rect width="88" height="22" fill="#eef2ec"/><ellipse cx="18" cy="5" rx="18" ry="7" fill="#3a6438"/><ellipse cx="80" cy="9" rx="10" ry="13" fill="#4a7446"/><ellipse cx="84" cy="22" rx="6" ry="8" fill="#5a8450"/>
<g fill="#38543a"><rect x="6" y="8" width="2" height="16"/><rect x="12" y="8" width="2.500" height="16"/><rect x="19" y="8" width="2" height="16"/><rect x="26" y="6" width="1.500" height="14"/></g>
<rect y="22" width="88" height="6" fill="#4c8438"/><rect y="26" width="88" height="39" fill="#4a8428"/><rect x="0" y="26" width="24" height="39" fill="#5a9030"/><ellipse cx="80" cy="46" rx="14" ry="24" fill="#2c5e22"/>
<path d="M26 65 Q22 40 32 14 Q36 1 50 1 Q64 3 66 18 Q72 40 78 65Z" fill="#86603e"/><path d="M32 20 Q28 40 30 56 Q34 40 36 20Z" fill="#a47a50"/>
<path d="M42 65 L42 46 L60 46 L62 65Z" fill="#101012"/>
<ellipse cx="51" cy="20" rx="9" ry="12" fill="#c48e6c"/><path d="M45 16 H49 M53 16 H58" stroke="#3a221a" stroke-width="1.800"/>
<path d="M22 65 L38 65 L49 42 L48 28 Q44 22 40 28 L37 44 Q26 52 22 65Z" fill="#cc9876"/><path d="M80 65 L64 65 L54 42 L55 27 Q60 21 64 27 L67 44 Q76 52 80 65Z" fill="#cc9876"/><path d="M42 30 L43 40 M45 28 L46 40 M58 28 L57 40 M61 29 L60 40" stroke="#a06850" stroke-width=".8"/><path d="M48 27 Q51 30 54 27" stroke="#8a4a3c" stroke-width="1.200" fill="none"/></g></svg></div><div class="lb" style="top:76px">Carley</div></div>
<div class="card" style="left:476px;top:382px;width:96px;height:101px"><div class="im"><svg viewBox="0 0 88 65" preserveAspectRatio="none"><defs><linearGradient id="sl1" x2="0" y2="1"><stop offset="0" stop-color="#66a2ee"/><stop offset="1" stop-color="#bcd6f6"/></linearGradient></defs>
<rect width="88" height="65" fill="#f3f3f7"/><rect width="88" height="34" fill="url(#sl1)"/><rect y="33" width="88" height="3" fill="#dfe8f6"/><rect y="36" width="88" height="8" fill="#e6ebf6" opacity=".7"/>
<g><path d="M25 34 L41 27 L44 19 L51 19 L54 27 L68 37 L67 39 L53 32 L52 40 L43 40 L42 32 L26 36Z" fill="#dc463a"/><path d="M25 34 L37 29 L38 31 L26 36Z M59 30 L68 37 L67 39 L57 32Z" fill="#c48c74"/><ellipse cx="47.500" cy="17.500" rx="2.800" ry="3.300" fill="#8a5040"/><rect x="44.500" y="23" width="2.500" height="11" fill="#f4eaea"/>
<path d="M43 38 L52 38 L51 45 L46 46Z" fill="#7a1616"/><path d="M43.500 45 L50 44 L49 56 L42 56Z" fill="#fdfdfd" stroke="#d2d2de" stroke-width=".7"/><ellipse cx="44" cy="57.500" rx="10" ry="2.200" fill="#d6d6e2"/></g></svg></div><div class="lb" style="top:75px">Apd</div></div>
<div class="card" style="left:582px;top:382px;width:97px;height:101px"><div class="im"><svg viewBox="0 0 88 65" preserveAspectRatio="none"><defs><linearGradient id="w1" x1="0" x2="1"><stop offset="0" stop-color="#b4d0f0"/><stop offset="1" stop-color="#5a92dc"/></linearGradient></defs><rect width="88" height="65" fill="#43484a"/>
<polygon points="32,0 88,0 88,12" fill="url(#w1)"/>
<g><polygon points="0,2 32,0 88,12 88,16 0,6" fill="#2c2622"/><polygon points="0,6 88,16 88,18 0,8" fill="#7c5a40"/><polygon points="0,8 88,18 88,21 0,11" fill="#1c1a18"/>
<polygon points="0,11 88,21 88,56 0,56" fill="#505554"/>
<g fill="#6a6e6c" opacity=".85"><rect x="26" y="19" width="13" height="12"/><rect x="27" y="34" width="12" height="14"/><rect x="50" y="24" width="11" height="10"/><rect x="50" y="37" width="11" height="14"/><rect x="66" y="27" width="9" height="9"/><rect x="66" y="39" width="9" height="13"/><rect x="78" y="28" width="9" height="22"/></g>
<g fill="#2c3030" opacity=".9"><rect x="40" y="18" width="2.500" height="36"/><rect x="62" y="22" width="2.500" height="32"/><rect x="76" y="25" width="1.500" height="28"/><rect x="0" y="32" width="88" height="1.500"/><rect x="0" y="36" width="88" height="1"/><ellipse cx="56" cy="44" rx="6" ry="5"/><ellipse cx="72" cy="34" rx="4" ry="4"/><ellipse cx="30" cy="42" rx="5" ry="5"/></g>
<g fill="#2a4626"><ellipse cx="14" cy="10" rx="14" ry="9"/><ellipse cx="8" cy="26" rx="8" ry="13"/><ellipse cx="44" cy="36" rx="3.500" ry="14"/><ellipse cx="22" cy="24" rx="5" ry="9"/></g>
<g fill="#4a6c3a"><ellipse cx="18" cy="6" rx="6" ry="3"/><ellipse cx="44" cy="28" rx="2" ry="5"/><ellipse cx="8" cy="20" rx="3" ry="4"/></g>
<rect x="0" y="8" width="10" height="57" fill="#1c201e" opacity=".7"/><path d="M0 44 Q20 42 44 49 Q66 54 88 49 L88 65 L0 65Z" fill="#181b1b"/></g></svg></div><div class="lb" style="top:75px">Jume</div></div>
<div class="card" style="left:688px;top:382px;width:94px;height:101px"><div class="im"><svg viewBox="0 0 88 65" preserveAspectRatio="none"><rect width="88" height="65" fill="#cfa968"/>
<g><rect x="0" y="0" width="18" height="65" fill="#dcba7e"/><rect x="4" y="0" width="3" height="50" fill="#e6c88c"/><rect x="11" y="0" width="3" height="50" fill="#c49c58"/><rect x="18" y="3" width="30" height="42" fill="#d4ae6c"/><rect x="22" y="8" width="22" height="30" fill="#e2c488"/>
<rect x="50" y="0" width="34" height="48" fill="#f8f0d4"/><rect x="56" y="0" width="3" height="52" fill="#cfa868"/><rect x="63" y="0" width="4" height="52" fill="#dcc084"/><rect x="71" y="0" width="3" height="52" fill="#c8a260"/><rect x="77" y="0" width="4" height="52" fill="#ecd8a4"/><rect x="83" y="0" width="5" height="65" fill="#b08444"/><rect x="47" y="0" width="5" height="60" fill="#e8d49c"/>
<rect y="48" width="88" height="17" fill="#9a6c34"/><path d="M0 48 L14 46 L24 60 L26 65 L0 65Z" fill="#5c3e1e"/><ellipse cx="14" cy="52" rx="8" ry="3" fill="#e0c48c"/>
<path d="M29 26 Q29 19 34 17 Q41 19 41 26 L41 58 L38 62 L32 62Z" fill="#17171b"/><ellipse cx="36" cy="17" rx="2.800" ry="3.300" fill="#a87656"/><rect x="37" y="30" width="4" height="12" fill="#2a58a4"/>
<path d="M44 52 L48 42 L55 42 L58 60 L44 62Z" fill="#ece4d4"/><rect x="57" y="46" width="7" height="16" fill="#1e1a16"/><path d="M66 62 L68 40 Q74 32 79 40 L81 62Z" fill="#4a3620"/><ellipse cx="74" cy="36" rx="5" ry="4" fill="#dcc494"/></g></svg></div><div class="lb" style="top:75px">Lone</div></div>
<div class="card" style="left:791px;top:382px;width:92px;height:101px"><div class="im"><svg viewBox="0 0 88 65" preserveAspectRatio="none"><defs><linearGradient id="br1" x2="0" y2="1"><stop offset="0" stop-color="#b2c0d6"/><stop offset=".5" stop-color="#ece6d6"/><stop offset="1" stop-color="#ecdcbc"/></linearGradient></defs>
<rect width="88" height="65" fill="#d6c19a"/><rect width="88" height="31" fill="url(#br1)"/>
<g><path d="M0 28 Q6 24 12 28 L40 29.500 L40 32 L0 32Z" fill="#4c4c3c"/><path d="M54 27 Q66 21 88 24 L88 34 L54 32Z" fill="#5c6438"/>
<path d="M50 32 L88 32 L88 46 L58 38Z" fill="#8c9c5a"/><rect y="31" width="88" height="2" fill="#aa9c7c" opacity=".6"/><rect y="56" width="88" height="9" fill="#d0bb94"/>
<path d="M42 26 Q47 20 53 26 L55 38 L53 50 L44 50 L42 38Z" fill="#f05e5a"/><ellipse cx="47" cy="20.500" rx="3" ry="3.500" fill="#3a2a26"/><ellipse cx="51.500" cy="21.500" rx="3" ry="3" fill="#ece4e0"/>
<path d="M53 26 L65 31 L63 33.500 L53 30Z" fill="#4a3a30"/><path d="M42 28 L28 38 L30 39.500 L43 32Z" fill="#8a6a50"/><rect x="45" y="50" width="2" height="8" fill="#c89070"/><rect x="49.500" y="50" width="2" height="8" fill="#c89070"/><ellipse cx="48" cy="59" rx="7" ry="1.500" fill="#a89068"/></g></svg></div><div class="lb" style="top:75px">Fly</div></div>
<div class="card" style="left:892px;top:382px;width:92px;height:101px"><div class="im nb"><svg viewBox="0 0 88 65" preserveAspectRatio="none"><defs><linearGradient id="gy1" x1="0" y1="0" x2="1" y2=".8"><stop offset="0" stop-color="#545454"/><stop offset=".5" stop-color="#9a9a9a"/><stop offset="1" stop-color="#dadada"/></linearGradient></defs>
<rect width="88" height="65" fill="url(#gy1)"/><path d="M20 0 Q50 8 88 10" stroke="#888" stroke-width=".6" fill="none"/>
<polygon points="0,17 10,19 88,53 88,65 0,65" fill="#767676"/>
<g stroke="#c4c4c4" stroke-width="1.200" fill="#3c3c3c"><polygon points="2,27 14,31 12,37 0,34"/><polygon points="16,32 30,37 28,44 14,39"/><polygon points="2,39 12,42 10,49 0,47"/><polygon points="14,44 30,49 28,57 12,52"/><polygon points="32,41 48,47 46,55 30,50"/><polygon points="0,53 12,56 12,65 0,65"/><polygon points="16,58 32,62 32,65 14,65"/><polygon points="36,57 54,61 56,65 36,65"/></g>
<g stroke="#cecece" stroke-width=".8" fill="#565656"><polygon points="6,19 18,24 17,28 4,24"/><polygon points="22,26 40,33 39,37 20,30"/><polygon points="44,35 62,43 60,48 42,40"/><polygon points="52,49 70,56 70,61 52,55"/><polygon points="66,46 84,54 84,58 66,51"/><polygon points="60,61 80,64 80,65 60,65"/></g>
<path d="M72 47 Q72 37 70 31" stroke="#3a3a3a" stroke-width=".9" fill="none"/></svg></div><div class="lb" style="top:75px">Unite</div></div>

<div id="bot" class="a">
<div class="a" style="left:21px;top:13px;width:36px;height:36px;border-radius:50%;background:#fff"></div>
<svg class="a" style="left:29px;top:23px" width="20" height="16" viewBox="0 0 20 16"><path d="M1 7 Q1 6 2 6 L8 6 L8 2.500 L18.500 8 L8.500 13.500 L8.500 10 L2 10 Q1 10 1 9Z" fill="#464b54"/></svg>
<div class="chev" style="left:70px;top:26px;width:9px;height:9px;transform:scaleX(.75) rotate(-45deg);border-color:#a4a8b0;border-width:2px"></div><div class="a" style="left:87px;top:20px;font-size:16.500px;color:#dcdee3;white-space:nowrap;letter-spacing:-0.3px;transform:scaleX(.92);transform-origin:left center">Augents for Site Photor</div>
<div class="a" style="left:876px;top:19px;width:100px;height:26px;background:linear-gradient(#3a9cf0,#1f82de);border-radius:2px;color:#d4e8fa;font-size:12px;text-align:center;line-height:26px">Clay</div>
</div>
<svg class="bic" style="left:433px" viewBox="0 0 24 24"><circle cx="12" cy="12" r="11" fill="#3090e2" stroke="#1b5796" stroke-width="2"/><circle cx="12" cy="12" r="8.500" fill="none" stroke="#6ab4f0" stroke-width="1"/><text x="12" y="17" text-anchor="middle" font-family="Liberation Sans, sans-serif" font-weight="bold" font-size="14" fill="#fff">f</text></svg>
<svg class="bic" style="left:471px" viewBox="0 0 24 24"><circle cx="12" cy="12" r="11" fill="#3090e2" stroke="#1b5796" stroke-width="2"/><rect x="10" y="5" width="4" height="9" rx="1.500" fill="#fff"/><circle cx="12" cy="17.500" r="2" fill="#fff"/></svg>
<svg class="bic" style="left:508px" viewBox="0 0 24 24"><circle cx="12" cy="12" r="11" fill="#3090e2" stroke="#1b5796" stroke-width="2"/><rect x="6" y="7" width="4" height="5" fill="#fff"/><rect x="11" y="7" width="7" height="5" fill="#fff"/><rect x="6" y="13" width="4" height="4" fill="#fff"/><rect x="11" y="13" width="7" height="4" fill="#fff"/></svg>
<svg class="bic" style="left:545px" viewBox="0 0 24 24"><circle cx="12" cy="12" r="11" fill="#3090e2" stroke="#1b5796" stroke-width="2"/><rect x="6" y="7.500" width="12" height="3" fill="#fff"/><rect x="6" y="13" width="12" height="3.500" fill="#fff"/></svg>
<div class="chev" style="left:585px;top:596px;width:6px;height:6px;transform:rotate(45deg);border-color:#f0f2f4;border-width:2px"></div>
</div></div>
</body></html>
